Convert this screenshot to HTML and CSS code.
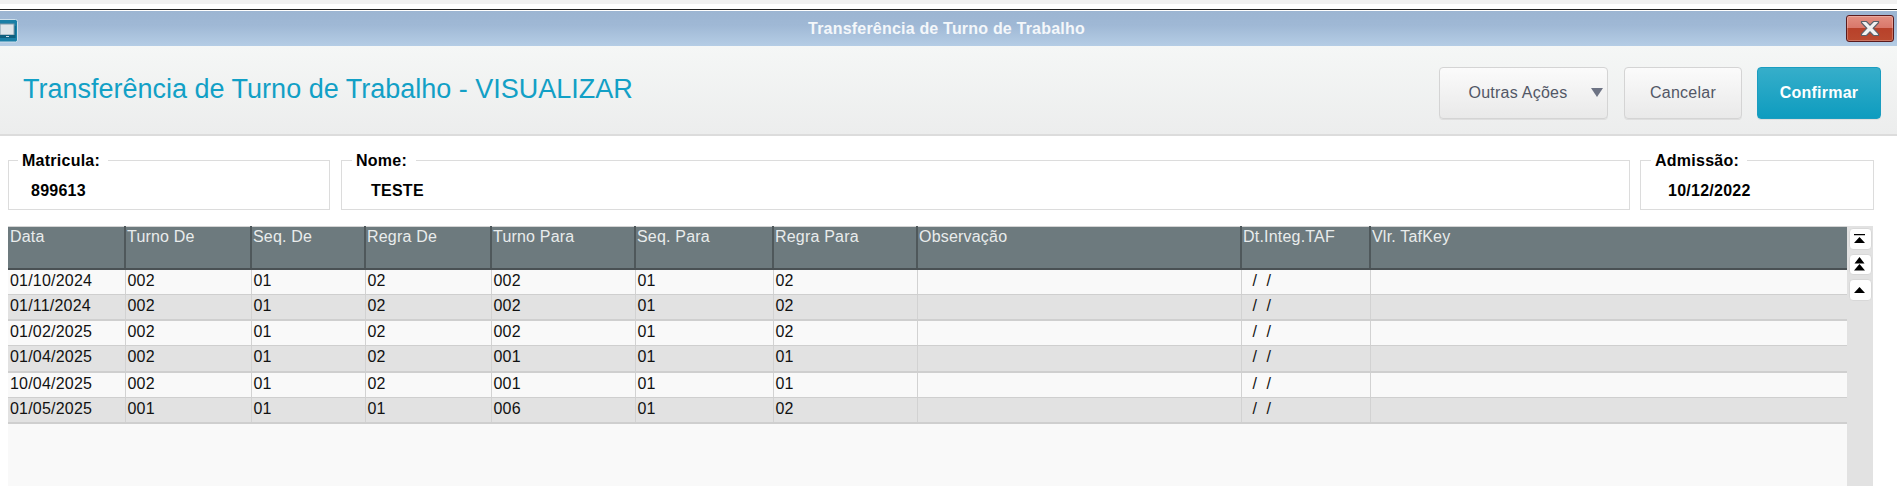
FILE: index.html
```html
<!DOCTYPE html>
<html lang="pt-BR">
<head>
<meta charset="utf-8">
<title>Transferência de Turno de Trabalho</title>
<link rel="stylesheet" href="styles.css">
</head>
<body>
<div class="strip"></div>
<div class="rule"></div>
<div class="titlebar">
  <svg class="app-icon" width="18" height="24" viewBox="0 0 18 24">
    <rect x="-4" y="0.5" width="21.5" height="22.5" rx="2" fill="#1a7fa6" stroke="#cfe0ec"/>
    <rect x="-2" y="7" width="18" height="12" fill="#0d6c90"/>
    <rect x="0" y="5" width="14" height="11" fill="#dfe6ea" stroke="#7d98a8"/>
    <rect x="-1" y="16" width="16" height="3" fill="#0f5f7e"/>
    <rect x="6" y="17" width="3" height="1" fill="#cfe0ec"/>
  </svg>
  <span class="titlebar-text">Transferência de Turno de Trabalho</span>
  <button class="close" aria-label="Fechar">
    <svg width="20" height="17" viewBox="0 0 20 17">
      <path d="M1.5 1.5h5l3.5 3.6 3.5-3.6h5v1.2l-5.3 5.6 5.3 5.6v1.600h-5l-3.500-3.600-3.500 3.600h-5v-1.600l5.300-5.600-5.300-5.600z" fill="#f1f1f1" stroke="#5b5f68" stroke-width="1.200"/>
    </svg>
  </button>
</div>
<header class="head">
  <h1 class="head-title">Transferência de Turno de Trabalho - VISUALIZAR</h1>
  <div class="actions">
    <button class="btn btn-more">Outras Ações<span class="caret"></span></button>
    <button class="btn btn-cancel">Cancelar</button>
    <button class="btn btn-ok">Confirmar</button>
  </div>
</header>
<section class="fields">
  <div class="field f-mat"><span class="legend">Matricula:</span><span class="value">899613</span></div>
  <div class="field f-nome"><span class="legend">Nome:</span><span class="value">TESTE</span></div>
  <div class="field f-adm"><span class="legend">Admissão:</span><span class="value">10/12/2022</span></div>
</section>
<section class="browse">
  <div class="grid-wrap">
    <table class="grid">
      <colgroup>
        <col class="c1"><col class="c2"><col class="c3"><col class="c4"><col class="c5"><col class="c6"><col class="c7"><col class="c8"><col class="c9"><col class="c10">
      </colgroup>
      <thead>
        <tr><th>Data</th><th>Turno De</th><th>Seq. De</th><th>Regra De</th><th>Turno Para</th><th>Seq. Para</th><th>Regra Para</th><th>Observação</th><th>Dt.Integ.TAF</th><th>Vlr. TafKey</th></tr>
      </thead>
      <tbody>
        <tr class="r-a"><td>01/10/2024</td><td>002</td><td>01</td><td>02</td><td>002</td><td>01</td><td>02</td><td></td><td class="dt">/ &nbsp;/</td><td></td></tr>
        <tr class="r-b"><td>01/11/2024</td><td>002</td><td>01</td><td>02</td><td>002</td><td>01</td><td>02</td><td></td><td class="dt">/ &nbsp;/</td><td></td></tr>
        <tr class="r-a"><td>01/02/2025</td><td>002</td><td>01</td><td>02</td><td>002</td><td>01</td><td>02</td><td></td><td class="dt">/ &nbsp;/</td><td></td></tr>
        <tr class="r-b"><td>01/04/2025</td><td>002</td><td>01</td><td>02</td><td>001</td><td>01</td><td>01</td><td></td><td class="dt">/ &nbsp;/</td><td></td></tr>
        <tr class="r-a"><td>10/04/2025</td><td>002</td><td>01</td><td>02</td><td>001</td><td>01</td><td>01</td><td></td><td class="dt">/ &nbsp;/</td><td></td></tr>
        <tr class="r-b"><td>01/05/2025</td><td>001</td><td>01</td><td>01</td><td>006</td><td>01</td><td>02</td><td></td><td class="dt">/ &nbsp;/</td><td></td></tr>
      </tbody>
    </table>
  </div>
  <div class="scroll">
    <button class="sb" aria-label="Início">
      <svg width="12" height="11" viewBox="0 0 12 11"><path d="M0 0h11v1.300H0zM5.500 3l5.500 6H0z" fill="#000"/></svg>
    </button>
    <button class="sb sb2" aria-label="Página acima">
      <svg width="12" height="15" viewBox="0 0 12 15"><path d="M5.500 0l5 6.500H.5zM5.500 7l5.500 6.500H0z" fill="#000"/></svg>
    </button>
    <button class="sb sb3" aria-label="Linha acima">
      <svg width="12" height="7" viewBox="0 0 12 7"><path d="M5.500 0l5.500 6H0z" fill="#000"/></svg>
    </button>
  </div>
</section>
</body>
</html>
```
FILE: styles.css
```css
* { box-sizing: border-box; }
html, body { margin: 0; height: 100%; overflow: hidden; }
body { background: #fff; font-family: "Liberation Sans", Arial, sans-serif; color: #000; }

.strip { height: 4px; background: #f1f1f1; }
.rule { height: 2px; margin-top: 5px; background: #fff; border-top: 1px solid #222; }

.titlebar {
  height: 35px; display: flex; align-items: center; justify-content: center;
  background: linear-gradient(#9cb5d2 0, #9fb8d5 40%, #b5cde5 100%);
  position: relative;
}
.app-icon { position: absolute; left: 0; top: 8px; }
.titlebar-text { color: #f4f7fa; font-weight: bold; font-size: 16px; letter-spacing: .2px; margin-left: -4px; }
.close {
  position: absolute; left: 1846px; top: 4px; width: 48px; height: 27px;
  padding: 0; display: flex; align-items: center; justify-content: center;
  border: 1px solid #5a1a1c; border-radius: 3px;
  background: linear-gradient(#e28e80 0, #d9776a 48%, #b8412a 50%, #bb4a30 100%);
  box-shadow: inset 0 0 0 1px rgba(255,255,255,.25);
}

.head {
  height: 90px; padding: 21px 16px 0 23px; display: flex; justify-content: space-between; align-items: flex-start;
  background: linear-gradient(#f5f7f6, #eceded);
  border-bottom: 2px solid #dcdcdc;
}
.head-title { margin: 4px 0 0; font-weight: normal; font-size: 27px; line-height: 36px; color: #12a0c6; }
.actions { display: flex; gap: 15px; }
.btn {
  height: 52px; padding: 0; font: 16px "Liberation Sans", Arial, sans-serif; letter-spacing: .25px; color: #525766;
  border: 1px solid #d4d4d4; border-radius: 4px;
  background: linear-gradient(#fbfbfb, #e9e9e9);
  box-shadow: 0 1px 0 #dedede;
}
.btn-more { width: 169px; margin-right: 1px; padding-right: 11px; position: relative; }
.caret {
  position: absolute; left: 151px; top: 20px;
  border-left: 6px solid transparent; border-right: 6px solid transparent; border-top: 9px solid #6d7384;
}
.btn-cancel { width: 118px; }
.btn-ok {
  width: 124px; color: #fff; font-weight: bold; border: 1px solid #1a9dc0;
  background: linear-gradient(#36aeca, #0e9cbf);
}

.fields { display: flex; gap: 11px; padding: 24px 23px 0 8px; }
.field { height: 50px; border: 1px solid #dcdcdc; position: relative; padding: 21px 0 0; flex: none; }
.legend {
  position: absolute; top: -9px; background: #fff; padding: 0 8px 0 4px;
  font-weight: bold; font-size: 16px; letter-spacing: .25px; line-height: 17px;
}
.value { font-weight: bold; font-size: 16px; letter-spacing: .25px; line-height: 18px; display: block; }
.f-mat { width: 322px; }
.f-mat .legend { left: 9px; }
.f-mat .value { margin-left: 22px; }
.f-nome { width: 1289px; }
.f-nome .legend { left: 10px; padding-right: 9px; }
.f-nome .value { margin-left: 29px; }
.f-adm { width: 234px; margin-left: -1px; }
.f-adm .legend { left: 10px; }
.f-adm .value { margin-left: 27px; }

.browse { display: flex; margin: 16px 0 0 8px; height: 260px; align-items: stretch; }
.grid-wrap { width: 1839px; background: #f9f9f9; }
.grid { width: 1839px; border-collapse: collapse; table-layout: fixed; font-size: 16px; letter-spacing: .2px; }
.c1 { width: 117px; } .c2 { width: 126px; } .c3 { width: 114px; } .c4 { width: 126px; } .c5 { width: 144px; }
.c6 { width: 138px; } .c7 { width: 144px; } .c8 { width: 324px; } .c9 { width: 129px; } .c10 { width: 477px; }

.grid th {
  height: 42px; padding: 0 0 0 1px; vertical-align: top; text-align: left; font-weight: normal; line-height: 19px;
  color: #e9ecec; background: #6d7a7e;
  border-top: 1px solid #d4d4d4; border-bottom: 2px solid #4a5154;
  border-right: 2px solid #4f585b; border-left: 1px solid #8e999c;
}
.grid th:first-child { border-left: 0; padding-left: 2px; }
.grid th:last-child { border-right: 0; }
.grid td { padding: 0 0 2px 2px; border-right: 1px solid #d2d2d2; border-bottom: 1px solid #cfcfcf; line-height: 22px; color: #111; white-space: nowrap; }
.grid td:last-child { border-right: 0; }
.r-a td { background: #f9f9f9; height: 25px; }
.r-b td { background: #e2e2e2; height: 26px; border-bottom-width: 2px; }
.grid td.dt { padding-left: 11px; }

.scroll { width: 26px; background: #e2e2e2; display: flex; flex-direction: column; align-items: center; padding-top: 2px; }
.sb {
  width: 23px; height: 22px; padding: 0; display: flex; align-items: center; justify-content: center;
  background: #fff; border: 1px solid #d8d8d8; border-radius: 4px;
}
.sb2 { height: 21px; margin-top: 4px; }
.sb3 { height: 22px; margin-top: 4px; }
```
